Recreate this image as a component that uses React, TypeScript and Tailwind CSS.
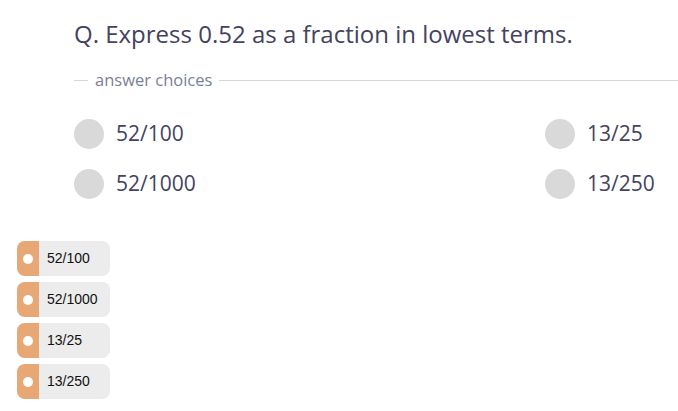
const choices = ["52/100", "13/25", "52/1000", "13/250"];
const pills = ["52/100", "52/1000", "13/25", "13/250"];

function Choice({ label }: { label: string }) {
  return (
    <div className="flex h-[30px] items-center gap-3">
      <span className="h-[30px] w-[30px] rounded-full bg-[#d9d9d9]" />
      <span className="text-[21px] text-[#43435e]">{label}</span>
    </div>
  );
}

function Pill({ label }: { label: string }) {
  return (
    <div className="flex h-[35px] w-[93px] overflow-hidden rounded-lg bg-[#ececec]">
      <div className="flex w-[22px] items-center justify-center bg-[#e8a875]">
        <span className="h-[10px] w-[10px] rounded-full bg-white" />
      </div>
      <span className="flex items-center pl-[8px] font-['Liberation_Sans',Arial,sans-serif] text-[14px] text-[#111]">
        {label}
      </span>
    </div>
  );
}

export default function App() {
  return (
    <div className="h-[411px] w-[678px] overflow-hidden bg-white font-['Open_Sans',sans-serif]">
      <div className="pl-[74px] pt-[17px]">
        <h1 className="text-[24px] leading-[34px] text-[#43435e]">
          Q. Express 0.52 as a fraction in lowest terms.
        </h1>
        <div className="mt-[18px] flex items-center">
          <span className="h-px w-[14px] bg-[#d6d6dc]" />
          <span className="px-[7px] text-[16.5px] leading-[22px] text-[#7a7f95]">answer choices</span>
          <span className="h-px flex-1 bg-[#d6d6dc]" />
        </div>
        <div className="mt-[28px] grid grid-cols-[471px_1fr] gap-y-[20px]">
          {choices.map((c) => (
            <Choice key={c} label={c} />
          ))}
        </div>
      </div>
      <div className="mt-[42px] flex flex-col gap-[6px] pl-[17px]">
        {pills.map((p) => (
          <Pill key={p} label={p} />
        ))}
      </div>
    </div>
  );
}
